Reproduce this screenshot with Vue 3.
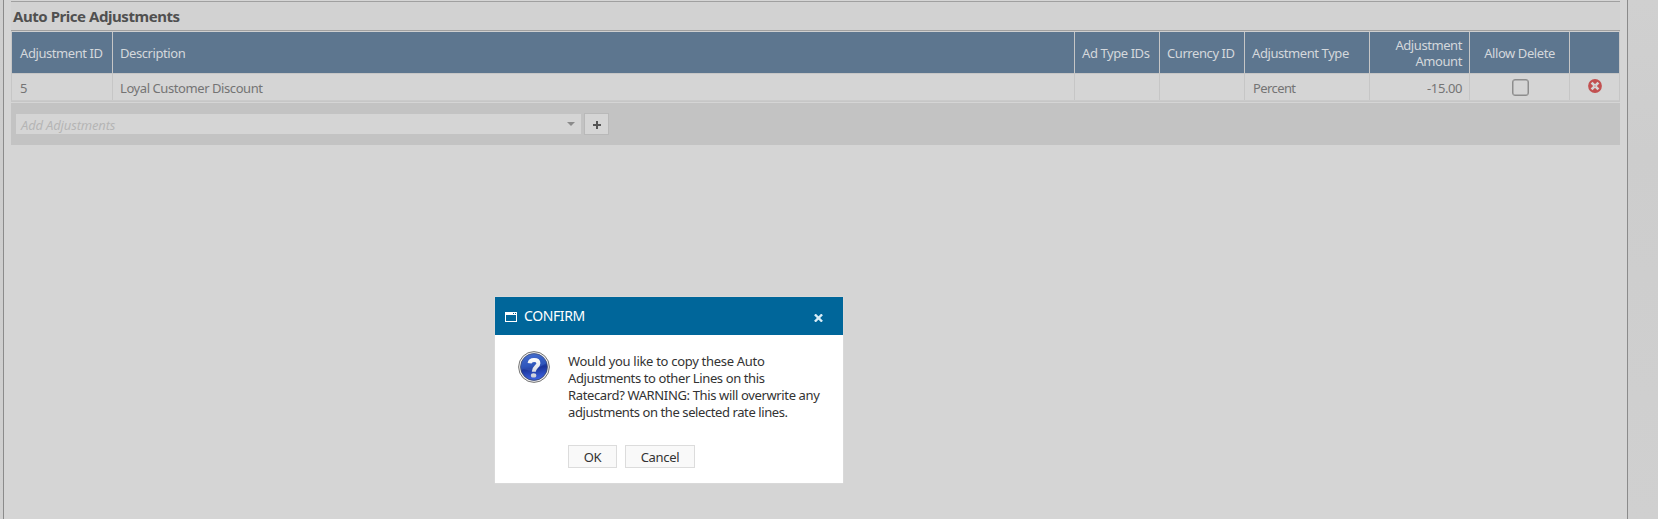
<script setup>
const columns = [
  { key: 'id', label: 'Adjustment ID', value: '5' },
  { key: 'desc', label: 'Description', value: 'Loyal Customer Discount' },
  { key: 'adtype', label: 'Ad Type IDs', value: '' },
  { key: 'currency', label: 'Currency ID', value: '' },
  { key: 'type', label: 'Adjustment Type', value: 'Percent' },
  { key: 'amount', label: 'Adjustment Amount', value: '-15.00' },
  { key: 'allow', label: 'Allow Delete', value: '' },
  { key: 'remove', label: '', value: '' }
]
const lines = [
  { cls: 'm1', text: 'Would you like to copy these Auto' },
  { cls: 'm2', text: 'Adjustments to other Lines on this' },
  { cls: 'm3', text: 'Ratecard? WARNING: This will overwrite any' },
  { cls: 'm4', text: 'adjustments on the selected rate lines.' }
]
</script>

<template>
  <div class="page">
    <main class="panel">
      <section class="content">
        <h2 class="title"><span>Auto Price Adjustments</span></h2>
        <div class="table">
          <div class="row head">
            <div v-for="c in columns" :key="c.key" class="cell" :class="c.key"><span>{{ c.label }}</span></div>
          </div>
          <div class="row data">
            <div v-for="c in columns" :key="c.key" class="cell" :class="c.key">
              <i v-if="c.key === 'allow'" class="check"></i>
              <svg v-else-if="c.key === 'remove'" class="del" width="14" height="14" viewBox="0 0 14 14">
                <circle cx="7" cy="7" r="6.9" fill="#c25050" />
                <path d="M3.6 3.6L10.4 10.4M10.4 3.6L3.6 10.4" stroke="#d6d6d6" stroke-width="2.7" />
                <circle cx="7" cy="7" r=".8" fill="#cc8a8a" />
              </svg>
              <span v-else>{{ c.value }}</span>
            </div>
          </div>
        </div>
        <div class="footer">
          <div class="combo">
            <span>Add Adjustments</span>
            <svg width="8" height="4" viewBox="0 0 8 4"><path d="M0 0h8L4 4z" fill="#8b8b8b" /></svg>
          </div>
          <button class="add">
            <svg width="8" height="8" viewBox="0 0 8 8"><path d="M3 0h2v3h3v2H5v3H3V5H0V3h3z" fill="#555" /></svg>
          </button>
        </div>
      </section>
    </main>
    <div class="dialog">
      <header class="bar">
        <svg width="12" height="10" viewBox="0 0 12 10">
          <path d="M0 0h12v10H0zM1 3v6h10V3z" fill="#fff" fill-rule="evenodd" />
          <path d="M8 1h1v1H8zM10 1h1v1h-1z" fill="#00669a" />
        </svg>
        <span class="name">CONFIRM</span>
        <svg class="close" width="9" height="8" viewBox="0 0 9 8"><path d="M.9 .4l7.2 7.2M8.1 .4L.9 7.6" stroke="#d8edf7" stroke-width="2.3" /></svg>
      </header>
      <div class="body">
        <svg class="question" width="32" height="32" viewBox="0 0 32 32">
          <defs>
            <linearGradient id="ball" x1="0" y1="0" x2="0.15" y2="1">
              <stop offset="0" stop-color="#3f68cc" />
              <stop offset=".5" stop-color="#1f46b0" />
              <stop offset=".6" stop-color="#1a3499" />
              <stop offset="1" stop-color="#3a5fdc" />
            </linearGradient>
            <linearGradient id="mark" gradientUnits="userSpaceOnUse" x1="0" y1="7" x2="0" y2="27">
              <stop offset="0" stop-color="#fff" />
              <stop offset="1" stop-color="#c9cdd8" />
            </linearGradient>
          </defs>
          <circle cx="16" cy="16" r="15.4" fill="#ececec" stroke="#777" />
          <circle cx="16" cy="16" r="13.4" fill="url(#ball)" stroke="#3a4568" stroke-width=".8" />
          <path d="M3 19C7 17 11 21 16 19S24 14 29 12A13.4 13.4 0 0 0 3 13z" fill="#5f86e0" opacity=".25" />
          <path d="M11.6 12.2C12 9.6 13.6 8.9 16 8.9C18.9 8.9 20.4 10.2 20.4 12.2C20.4 15.6 15.8 15.6 15.8 20.8" fill="none" stroke="url(#mark)" stroke-width="4" />
          <ellipse cx="15.6" cy="24.4" rx="2.7" ry="2.2" fill="url(#mark)" />
        </svg>
        <div>
          <p class="message"><span v-for="l in lines" :key="l.cls" :class="l.cls">{{ l.text }}</span></p>
          <div class="actions">
            <button class="btn ok">OK</button>
            <button class="btn cancel">Cancel</button>
          </div>
        </div>
      </div>
    </div>
  </div>
</template>

<style>
body { margin: 0; overflow: hidden; }
</style>
<style scoped>
* { box-sizing: border-box; }
svg { display: block; flex: none; }
.page { position: relative; height: 519px; padding-left: 3px; overflow: hidden; background: linear-gradient(#d0d0d0, #cdcdcd 30%, #d0d0d0); font: 13px/16px "Noto Sans", "Open Sans", sans-serif; color: #747474; }
.panel { width: 1625px; height: 519px; background: #d5d5d5; border: solid #8b8b8b; border-width: 0 1px; padding: 1px 7px; }
.content { width: 1609px; }
.title { margin: 0; height: 30px; border: solid #a0a0a0; border-width: 1px 0; background: #d2d2d2; color: #505050; font-size: 15px; line-height: 29px; font-weight: 700; padding-left: 2px; letter-spacing: -.45px; }
.table { border: 1px solid #c6c6c6; border-top-color: #cfcfcf; height: 71px; }
.row { display: grid; grid-template-columns: 101px 962px 85px 85px 125px 100px 100px 49px; }
.head { height: 41px; background: #5d768f; color: #d4d8dc; }
.data { height: 28px; border-top: 1px solid #c6c6c6; border-bottom: 1px solid #cacaca; }
.cell { display: flex; align-items: center; padding: 0 7px 0 7px; border-right: 1px solid #c6c6c6; letter-spacing: -.42px; white-space: nowrap; }
.cell.id { padding-left: 8px; }
.data .cell { padding-top: 1px; }
.cell.remove { border-right: 0; }
.cell.amount { justify-content: flex-end; text-align: right; white-space: normal; }
.data .cell.type { letter-spacing: -.6px; padding-left: 8px; }
.cell.allow, .cell.remove { justify-content: center; }
.check { width: 17px; height: 17px; margin-left: 2px; border: 1px solid #8d8d8d; border-radius: 3px; box-shadow: inset 0 0 0 .5px #8d8d8d; }
.data .cell.remove, .data .cell.allow { padding-top: 0; }
.del { margin-top: -3px; margin-left: 1px; }
.footer { margin-top: 1px; height: 42px; background: #c3c3c3; padding: 10px 5px; display: flex; gap: 3px; }
.combo { width: 565px; height: 20px; margin-top: 1px; background: #d5d5d5; display: flex; align-items: center; justify-content: space-between; padding: 1px 6px 0 5px; color: #b5b5b5; font-style: italic; letter-spacing: -.16px; }
.combo svg { margin-top: -1px; }
.add { width: 25px; height: 22px; border: 1px solid #b9b9b9; background: #d5d5d5; padding: 2px 0 0 1px; display: flex; align-items: center; justify-content: center; }
.dialog { position: absolute; left: 495px; top: 297px; width: 348px; height: 186px; background: #fff; box-shadow: 0 0 1px #eee; color: #333; }
.bar { height: 38px; background: #00669a; display: flex; align-items: center; padding: 2px 20px 0 10px; color: #fff; }
.name { font-size: 14px; margin: -2px auto 0 7px; letter-spacing: -.4px; }
.close { margin-top: 1px; }
.body { display: flex; padding: 16px 0 0 23px; gap: 18px; }
.message { margin: 0; padding-top: 2px; line-height: 17px; letter-spacing: -.3px; white-space: nowrap; }
.message span { display: block; }
.m2 { letter-spacing: -.39px; }
.m3 { letter-spacing: -.36px; }
.m4 { letter-spacing: -.41px; }
.actions { display: flex; gap: 8px; margin-top: 24px; }
.btn { height: 23px; border: 1px solid #dcdcdc; background: #f9f9f9; font: inherit; color: #333; letter-spacing: -.3px; padding: 0; }
.ok { width: 49px; }
.cancel { width: 70px; }
</style>
